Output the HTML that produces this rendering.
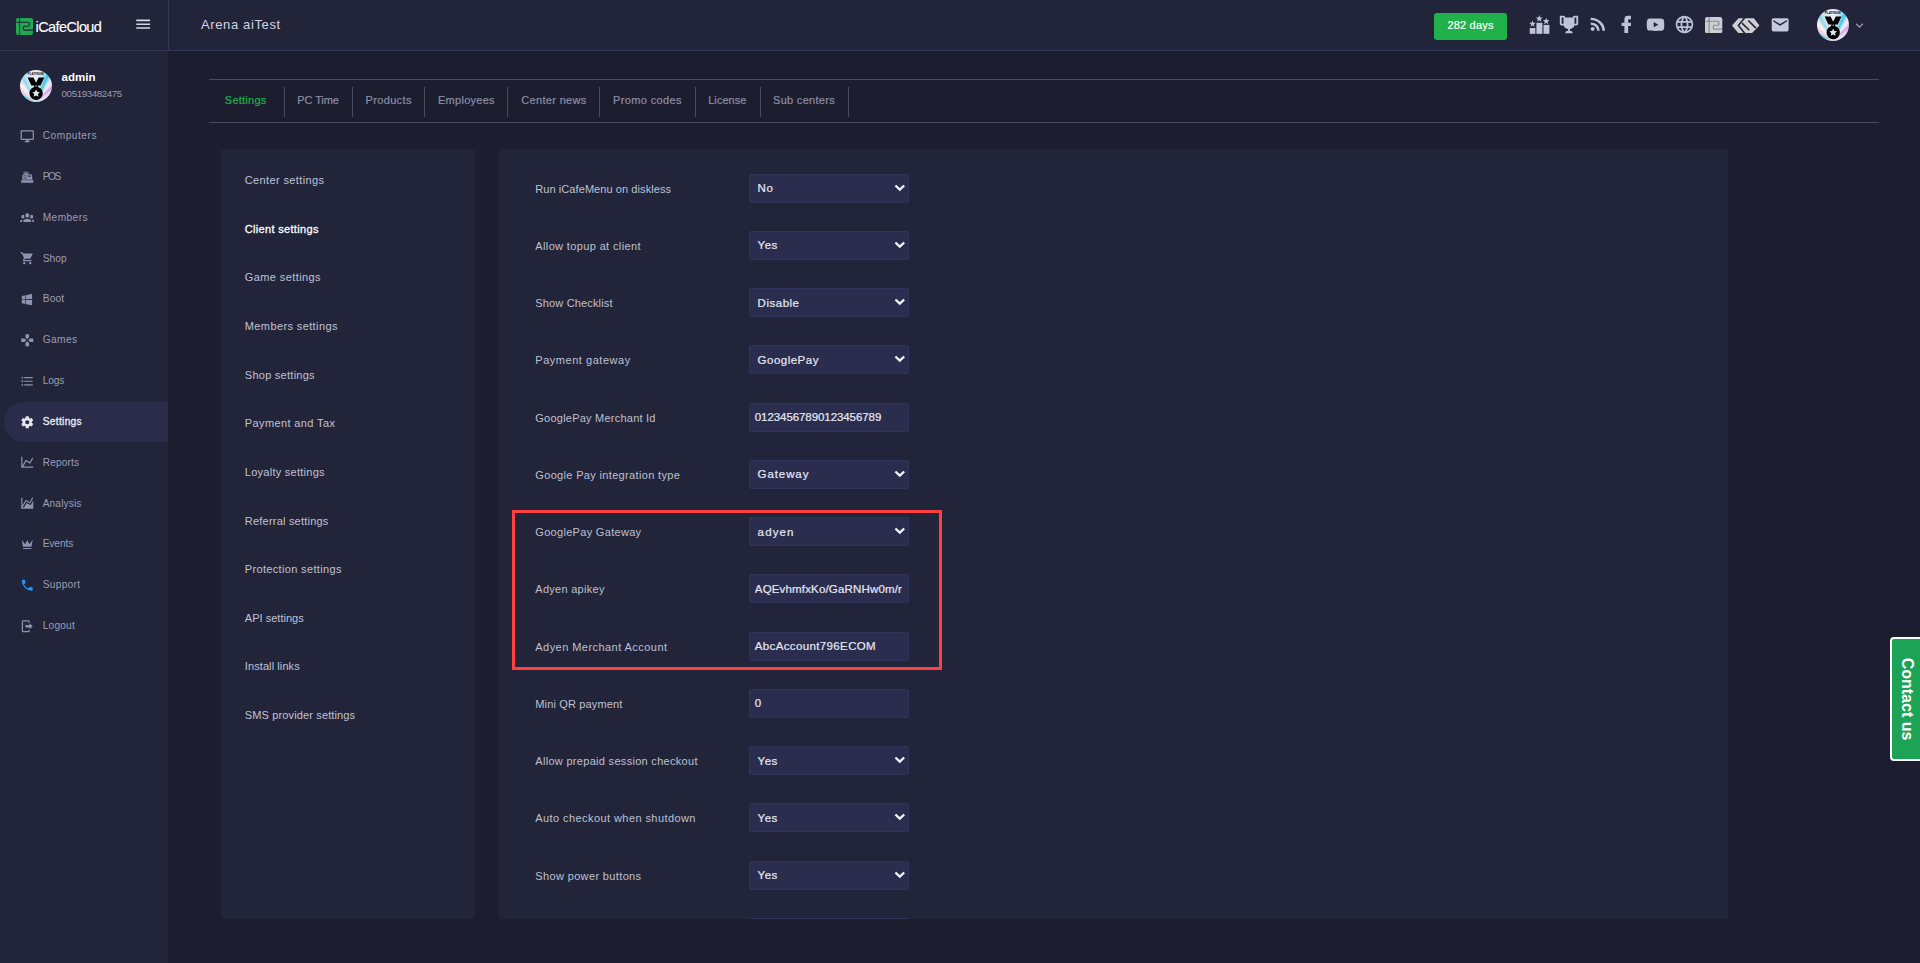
<!DOCTYPE html><html lang="en"><head><meta charset="utf-8"><title>iCafeCloud - Client settings</title><style>

*{box-sizing:border-box;margin:0;padding:0}
html,body{width:1920px;height:963px;overflow:hidden;background:#1c1d2e;font-family:"Liberation Sans", sans-serif;}
.abs,.t,.ic{position:absolute}
.t{white-space:nowrap;line-height:20px;height:20px}
#hdr{left:0;top:0;width:1920px;height:51px;background:#222439;border-bottom:1px solid #34365a}
#side{left:0;top:51px;width:168px;height:912px;background:#222439}
#vline{left:168px;top:0;width:1px;height:50px;background:#34365a}
.panel{background:#222439;border-radius:4px}
.sel,.inp{left:749px;width:160px;height:29px;background:#2b2d4f;border:1px solid #31345a;border-radius:2px}
.hl{background:#484a5d;height:1px}
.vl{background:#484a5d;width:1px}

</style></head><body>
<div class="abs" id="hdr"></div><div class="abs" id="side"></div><div class="abs" id="vline"></div>
<svg class="ic" style="left:16px;top:18px" width="17" height="17" viewBox="0 0 17 17"><rect x="0" y="0" width="17" height="17" rx="2.2" fill="#22a853"/><g fill="none" stroke="#222439" stroke-width="1.1"><path d="M3.700 0V17" stroke-width=".8"/><path d="M0 4.2H12.200Q13.300 4.200 13.300 5.300V7.200Q13.300 8.300 12.200 8.300H8.400Q7.300 8.300 7.300 9.400V11Q7.300 12.100 8.400 12.100H17"/></g></svg>
<svg class="ic" style="left:134.1px;top:15.4px" width="18.4" height="18.4" viewBox="0 0 24 24"><path fill="#d5d7e4" d="M3,6H21V8H3V6M3,11H21V13H3V11M3,16H21V18H3V16Z"/></svg>
<div class="abs" style="left:1434px;top:13px;width:73px;height:27px;background:#21b14b;border-radius:3px"></div>
<svg class="ic" style="left:1529px;top:15px" width="21" height="19" viewBox="0 0 21 19"><g fill="#c2c5d7"><rect x="0.7" y="13.05" width="5.7" height="5.750"/><rect x="7.4" y="7.8" width="6" height="11"/><rect x="14.5" y="9.9" width="5.9" height="8.9"/><polygon points="3.50,5.40 4.36,7.71 6.83,7.82 4.90,9.35 5.56,11.73 3.50,10.37 1.44,11.73 2.10,9.35 0.17,7.82 2.64,7.71"/><polygon points="10.30,0.00 11.21,2.44 13.82,2.56 11.78,4.18 12.47,6.69 10.30,5.25 8.13,6.69 8.82,4.18 6.78,2.56 9.39,2.44"/><polygon points="17.20,2.70 18.09,5.08 20.62,5.19 18.64,6.77 19.32,9.21 17.20,7.81 15.08,9.21 15.76,6.77 13.78,5.19 16.31,5.08"/></g></svg>
<svg class="ic" style="left:1557.9666666666667px;top:14.05px" width="22" height="21" viewBox="0 0 24 24" preserveAspectRatio="none"><path fill="#c0c3d5" d="M20.2,2H19.5H18C17.1,2 16,3 16,4H8C8,3 6.9,2 6,2H4.5H3.8H2V11C2,12 3,13 4,13H6.2C6.6,15 7.9,16.7 11,17V19.1C8.8,19.3 8,20.4 8,21.7V22H16V21.7C16,20.4 15.2,19.3 13,19.1V17C16.1,16.7 17.4,15 17.8,13H20C21,13 22,12 22,11V2H20.2M4,11V4H6V6V11C5.1,11 4.3,11 4,11M20,11C19.7,11 18.9,11 18,11V6V4H20V11Z"/></svg>
<svg class="ic" style="left:1586.9233333333332px;top:14.490749999999998px" width="22.06" height="20.05" viewBox="0 0 24 24" preserveAspectRatio="none"><path fill="#c0c3d5" d="M6.18,15.64A2.18,2.18 0 0,1 8.36,17.82C8.36,19 7.38,20 6.18,20C5,20 4,19 4,17.82A2.18,2.18 0 0,1 6.18,15.64M4,4.44A15.56,15.56 0 0,1 19.56,20H16.73A12.73,12.73 0 0,0 4,7.27V4.44M4,10.1A9.9,9.9 0 0,1 13.9,20H11.07A7.07,7.07 0 0,0 4,12.93V10.1Z"/></svg>
<svg class="ic" style="left:1615.3200000000002px;top:14.07px" width="22.56" height="20.76" viewBox="0 0 24 24" preserveAspectRatio="none"><path fill="#c0c3d5" d="M17,2V2H17V6H15C14.31,6 14,6.81 14,7.5V10H14L17,10V14H14V22H10V14H7V10H10V6A4,4 0 0,1 14,2H17Z"/></svg>
<svg class="ic" style="left:1644.95px;top:13.841666666666669px" width="21" height="21.4" viewBox="0 0 24 24" preserveAspectRatio="none"><path fill="#c0c3d5" d="M10,15L15.19,12L10,9V15M21.56,7.17C21.69,7.64 21.78,8.27 21.84,9.07C21.91,9.87 21.94,10.56 21.94,11.16L22,12C22,14.19 21.84,15.8 21.56,16.83C21.31,17.73 20.73,18.31 19.83,18.56C19.36,18.69 18.5,18.78 17.18,18.84C15.88,18.91 14.69,18.94 13.59,18.94L12,19C7.81,19 5.2,18.84 4.17,18.56C3.27,18.31 2.69,17.73 2.44,16.83C2.31,16.36 2.22,15.73 2.16,14.93C2.09,14.13 2.06,13.44 2.06,12.84L2,12C2,9.81 2.16,8.2 2.44,7.17C2.69,6.27 3.27,5.69 4.17,5.44C4.64,5.31 5.5,5.22 6.82,5.16C8.12,5.09 9.31,5.06 10.41,5.06L12,5C16.19,5 18.8,5.16 19.83,5.44C20.73,5.69 21.31,6.27 21.56,7.17Z"/></svg>
<svg class="ic" style="left:1673.95px;top:14.05px" width="21" height="21" viewBox="0 0 24 24"><path fill="#c0c3d5" d="M16.36,14C16.44,13.34 16.5,12.68 16.5,12C16.5,11.32 16.44,10.66 16.36,10H19.74C19.9,10.64 20,11.31 20,12C20,12.69 19.9,13.36 19.74,14M14.59,19.56C15.19,18.45 15.65,17.25 15.97,16H18.92C17.96,17.65 16.43,18.93 14.59,19.56M14.34,14H9.66C9.56,13.34 9.5,12.68 9.5,12C9.5,11.32 9.56,10.65 9.66,10H14.34C14.43,10.65 14.5,11.32 14.5,12C14.5,12.68 14.43,13.34 14.34,14M12,19.96C11.17,18.76 10.5,17.43 10.09,16H13.91C13.5,17.43 12.83,18.76 12,19.96M8,8H5.08C6.03,6.34 7.57,5.06 9.4,4.44C8.8,5.55 8.35,6.75 8,8M5.08,16H8C8.35,17.25 8.8,18.45 9.4,19.56C7.57,18.93 6.03,17.65 5.08,16M4.26,14C4.1,13.36 4,12.69 4,12C4,11.31 4.1,10.64 4.26,10H7.64C7.56,10.66 7.5,11.32 7.5,12C7.5,12.68 7.56,13.34 7.64,14M12,4.03C12.83,5.23 13.5,6.57 13.91,8H10.09C10.5,6.57 11.17,5.23 12,4.03M18.92,8H15.97C15.65,6.75 15.19,5.55 14.59,4.44C16.43,5.07 17.96,6.34 18.92,8M12,2C6.47,2 2,6.5 2,12A10,10 0 0,0 12,22A10,10 0 0,0 22,12A10,10 0 0,0 12,2Z"/></svg>
<svg class="ic" style="left:1705.400px;top:16.500px" width="17.3" height="16.400" viewBox="0 0 17 17" preserveAspectRatio="none"><rect x="0" y="0" width="17" height="17" rx="2.4" fill="#cdcdd2"/><g fill="none" stroke="#222439" stroke-opacity=".38" stroke-width="1.2"><path d="M4 0V17"/><path d="M0 4.4H12.600Q13.600 4.400 13.600 5.400V7.600Q13.600 8.600 12.600 8.600H9.200Q8.200 8.600 8.200 9.600V11.600Q8.200 12.600 9.200 12.600H17"/></g></svg>
<svg class="ic" style="left:1732.300px;top:17.550px" width="27.600" height="15.400" viewBox="620 145 530 295" preserveAspectRatio="none"><polygon points="620,290 745,148 1040,148 1147,290 1000,437 745,437" fill="#d0d0d4"/><g fill="none" stroke="#222439" stroke-width="30"><polyline points="868,135 742,290 875,450"/><line x1="812" y1="243" x2="952" y2="380"/><line x1="935" y1="195" x2="1080" y2="340"/></g></svg>
<svg class="ic" style="left:1769.5083333333334px;top:14.7px" width="20.3" height="19.8" viewBox="0 0 24 24" preserveAspectRatio="none"><path fill="#c5c9db" d="M20,8L12,13L4,8V6L12,11L20,6M20,4H4C2.89,4 2,4.89 2,6V18A2,2 0 0,0 4,20H20A2,2 0 0,0 22,18V6C22,4.89 21.1,4 20,4Z"/></svg>
<svg class="ic" style="left:1851.9px;top:17.8px" width="15" height="15" viewBox="0 0 24 24"><path fill="#9a9ec0" d="M7.41,8.58L12,13.17L16.59,8.58L18,10L12,16L6,10L7.41,8.58Z"/></svg>
<div class="abs" style="left:20px;top:70px;width:32px;height:32px;border-radius:50%;background:conic-gradient(from 0deg at 50% 100%, #e8eaf4 0deg, #dfe8f2 10deg, #9adcee 18deg, #3fc2ea 24deg, #bfe4f2 31deg, #f6eef4 37deg, #f8d8ec 41deg, #c4a4f0 47deg, #efc8e8 53deg, #e4e6f2 60deg, #dfe6f0 70deg, #dfe6f0 285deg, #5fd0ea 295deg, #e8d8ee 303deg, #f4c8e8 308deg, #f8e8ee 315deg, #fff4e6 319deg, #d8eaf2 325deg, #8fd6ea 331deg, #cfe6f0 340deg, #e4e8f2 352deg, #e8eaf4 360deg)"></div><svg class="ic" style="left:20px;top:70px" width="32" height="32" viewBox="0 0 32 32"><text x="15.6" y="4.9" font-size="3.9" font-weight="700" text-anchor="middle" fill="#111" font-family="Liberation Sans, sans-serif" textLength="16" lengthAdjust="spacingAndGlyphs">PLATINUM</text><path d="M7.600 7.500h5.900l2.600 5.200 2.600-5.200h5.600l-3.700 8h-9.300z" fill="#000"/><circle cx="16.100" cy="16.300" r="2" fill="#000"/><circle cx="16.100" cy="16.100" r=".75" fill="#cfd8e6"/><circle cx="16.100" cy="23.300" r="6.650" fill="#000"/><path d="M16.100 19.500l1.150 2.350 2.600.38-1.880 1.830.45 2.580-2.320-1.220-2.320 1.220.45-2.580-1.880-1.830 2.600-.38z" fill="#dfe6f0"/></svg>
<div class="abs" style="left:1817.0px;top:8.899999999999999px;width:32.2px;height:32.2px;border-radius:50%;background:conic-gradient(from 0deg at 50% 100%, #e8eaf4 0deg, #dfe8f2 10deg, #9adcee 18deg, #3fc2ea 24deg, #bfe4f2 31deg, #f6eef4 37deg, #f8d8ec 41deg, #c4a4f0 47deg, #efc8e8 53deg, #e4e6f2 60deg, #dfe6f0 70deg, #dfe6f0 285deg, #5fd0ea 295deg, #e8d8ee 303deg, #f4c8e8 308deg, #f8e8ee 315deg, #fff4e6 319deg, #d8eaf2 325deg, #8fd6ea 331deg, #cfe6f0 340deg, #e4e8f2 352deg, #e8eaf4 360deg)"></div><svg class="ic" style="left:1817.0px;top:8.899999999999999px" width="32.2" height="32.2" viewBox="0 0 32 32"><text x="15.6" y="4.9" font-size="3.9" font-weight="700" text-anchor="middle" fill="#111" font-family="Liberation Sans, sans-serif" textLength="16" lengthAdjust="spacingAndGlyphs">PLATINUM</text><path d="M7.600 7.500h5.900l2.600 5.200 2.600-5.200h5.600l-3.700 8h-9.300z" fill="#000"/><circle cx="16.100" cy="16.300" r="2" fill="#000"/><circle cx="16.100" cy="16.100" r=".75" fill="#cfd8e6"/><circle cx="16.100" cy="23.300" r="6.650" fill="#000"/><path d="M16.100 19.500l1.150 2.350 2.600.38-1.880 1.830.45 2.580-2.320-1.220-2.320 1.220.45-2.580-1.880-1.830 2.600-.38z" fill="#dfe6f0"/></svg>
<div class="abs" style="left:4px;top:402px;width:164px;height:40px;background:#2a2c49;border-radius:20px 0 0 20px"></div>
<svg class="ic" style="left:19.7px;top:128.8px" width="14.5" height="14.5" viewBox="0 0 24 24"><path fill="#8f93ae" d="M21,16H3V4H21M21,2H3C1.89,2 1,2.89 1,4V16A2,2 0 0,0 3,18H10V20H8V22H16V20H14V18H21A2,2 0 0,0 23,16V4C23,2.89 22.1,2 21,2Z"/></svg>
<svg class="ic" style="left:19.7px;top:169.64px" width="14.5" height="14.5" viewBox="0 0 24 24"><path fill="#8f93ae" d="M2,17H22V21H2V17M6.25,7H9V6H6V3H14V6H11V7H17.8C18.8,7 19.8,8 20,9L20.5,16H3.5L4.05,9C4.05,8 5.05,7 6.25,7M13,9V11H18V9H13M6,9V10H8V9H6M9,9V10H11V9H9M6,11V12H8V11H6M9,11V12H11V11H9M6,13V14H8V13H6M9,13V14H11V13H9M7,4V5H13V4H7Z"/></svg>
<svg class="ic" style="left:19.7px;top:210.47px" width="14.5" height="14.5" viewBox="0 0 24 24"><path fill="#8f93ae" d="M12,5.5A3.5,3.5 0 0,1 15.5,9A3.5,3.5 0 0,1 12,12.5A3.5,3.5 0 0,1 8.5,9A3.5,3.5 0 0,1 12,5.5M5,8C5.56,8 6.08,8.15 6.53,8.42C6.38,9.85 6.8,11.27 7.66,12.38C7.16,13.34 6.16,14 5,14A3,3 0 0,1 2,11A3,3 0 0,1 5,8M19,8A3,3 0 0,1 22,11A3,3 0 0,1 19,14C17.84,14 16.84,13.34 16.34,12.38C17.2,11.27 17.62,9.85 17.47,8.42C17.92,8.15 18.44,8 19,8M5.5,18.25C5.5,16.18 8.41,14.5 12,14.5C15.59,14.5 18.5,16.18 18.5,18.25V20H5.5V18.25M0,20V18.5C0,17.11 1.89,15.94 4.45,15.6C3.86,16.28 3.5,17.22 3.5,18.25V20H0M24,20H20.5V18.25C20.5,17.22 20.14,16.28 19.55,15.6C22.11,15.94 24,17.11 24,18.5V20Z"/></svg>
<svg class="ic" style="left:19.7px;top:251.3px" width="14.5" height="14.5" viewBox="0 0 24 24"><path fill="#8f93ae" d="M17,18C15.89,18 15,18.89 15,20A2,2 0 0,0 17,22A2,2 0 0,0 19,20C19,18.89 18.1,18 17,18M1,2V4H3L6.6,11.59L5.24,14.04C5.09,14.32 5,14.65 5,15A2,2 0 0,0 7,17H19V15H7.42A0.25,0.25 0 0,1 7.17,14.75C7.17,14.7 7.18,14.66 7.2,14.63L8.1,13H15.55C16.3,13 16.96,12.58 17.3,11.97L20.88,5.5C20.95,5.34 21,5.17 21,5A1,1 0 0,0 20,4H5.21L4.27,2M7,18C5.89,18 5,18.89 5,20A2,2 0 0,0 7,22A2,2 0 0,0 9,20C9,18.89 8.1,18 7,18Z"/></svg>
<svg class="ic" style="left:19.7px;top:292.14px" width="14.5" height="14.5" viewBox="0 0 24 24"><path fill="#8f93ae" d="M3,12V6.75L9,5.43V11.91L3,12M20,3V11.75L10,11.9V5.21L20,3M3,13L9,13.09V19.9L3,18.75V13M20,13.25V22L10,20.09V13.1L20,13.25Z"/></svg>
<svg class="ic" style="left:19.7px;top:332.98px" width="14.5" height="14.5" viewBox="0 0 24 24"><path fill="#8f93ae" d="M16.5,9L13.5,12L16.5,15H22V9M9,16.5V22H15V16.5L12,13.5M7.5,9H2V15H7.5L10.5,12M15,7.5V2H9V7.5L12,10.5L15,7.5Z"/></svg>
<svg class="ic" style="left:19.7px;top:373.81px" width="14.5" height="14.5" viewBox="0 0 24 24"><path fill="#8f93ae" d="M7,5H21V7H7V5M7,13V11H21V13H7M4,4.5A1.5,1.5 0 0,1 5.5,6A1.5,1.5 0 0,1 4,7.5A1.5,1.5 0 0,1 2.5,6A1.5,1.5 0 0,1 4,4.5M4,10.5A1.5,1.5 0 0,1 5.5,12A1.5,1.5 0 0,1 4,13.5A1.5,1.5 0 0,1 2.5,12A1.5,1.5 0 0,1 4,10.5M7,19V17H21V19H7M4,16.5A1.5,1.5 0 0,1 5.5,18A1.5,1.5 0 0,1 4,19.5A1.5,1.5 0 0,1 2.5,18A1.5,1.5 0 0,1 4,16.5Z"/></svg>
<svg class="ic" style="left:19.7px;top:414.64px" width="14.5" height="14.5" viewBox="0 0 24 24"><path fill="#e4e6ef" d="M12,15.5A3.5,3.5 0 0,1 8.5,12A3.5,3.5 0 0,1 12,8.5A3.5,3.5 0 0,1 15.5,12A3.5,3.5 0 0,1 12,15.5M19.43,12.97C19.47,12.65 19.5,12.33 19.5,12C19.5,11.67 19.47,11.34 19.43,11L21.54,9.37C21.73,9.22 21.78,8.95 21.66,8.73L19.66,5.27C19.54,5.05 19.27,4.96 19.05,5.05L16.56,6.05C16.04,5.66 15.5,5.32 14.87,5.07L14.5,2.42C14.46,2.18 14.25,2 14,2H10C9.75,2 9.54,2.18 9.5,2.42L9.13,5.07C8.5,5.32 7.96,5.66 7.44,6.05L4.95,5.05C4.73,4.96 4.46,5.05 4.34,5.27L2.34,8.73C2.21,8.95 2.27,9.22 2.46,9.37L4.57,11C4.53,11.34 4.5,11.67 4.5,12C4.5,12.33 4.53,12.65 4.57,12.97L2.46,14.63C2.27,14.78 2.21,15.05 2.34,15.27L4.34,18.73C4.46,18.95 4.73,19.03 4.95,18.95L7.44,17.94C7.96,18.34 8.5,18.68 9.13,18.93L9.5,21.58C9.54,21.82 9.75,22 10,22H14C14.25,22 14.46,21.82 14.5,21.58L14.87,18.93C15.5,18.67 16.04,18.34 16.56,17.94L19.05,18.95C19.27,19.03 19.54,18.95 19.66,18.73L21.66,15.27C21.78,15.05 21.73,14.78 21.54,14.63L19.43,12.97Z"/></svg>
<svg class="ic" style="left:19.7px;top:455.48px" width="14.5" height="14.5" viewBox="0 0 24 24"><path fill="#8f93ae" d="M16,11.78L20.24,4.45L21.97,5.45L16.74,14.5L10.23,10.75L5.46,19H22V21H2V3H4V17.54L9.5,8L16,11.78Z"/></svg>
<svg class="ic" style="left:19.7px;top:496.31px" width="14.5" height="14.5" viewBox="0 0 24 24"><path fill="#8f93ae" d="M17.45,15.18L22,7.31V19L22,21H2V3H4V15.54L9.5,6L16,9.78L20.24,2.45L21.97,3.45L16.74,12.5L10.23,8.75L4.31,19H6.57L10.96,11.44L17.45,15.18Z"/></svg>
<svg class="ic" style="left:19.7px;top:537.15px" width="14.5" height="14.5" viewBox="0 0 24 24"><path fill="#8f93ae" d="M5,16L3,5L8.5,12L12,5L15.5,12L21,5L19,16H5M19,19A1,1 0 0,1 18,20H6A1,1 0 0,1 5,19V18H19V19Z"/></svg>
<svg class="ic" style="left:19.7px;top:577.99px" width="14.5" height="14.5" viewBox="0 0 24 24"><path fill="#1e9bff" d="M6.62,10.79C8.06,13.62 10.38,15.94 13.21,17.38L15.41,15.18C15.69,14.9 16.08,14.82 16.43,14.93C17.55,15.3 18.75,15.5 20,15.5A1,1 0 0,1 21,16.5V20A1,1 0 0,1 20,21A17,17 0 0,1 3,4A1,1 0 0,1 4,3H7.5A1,1 0 0,1 8.5,4C8.5,5.25 8.7,6.45 9.07,7.57C9.18,7.92 9.1,8.31 8.82,8.59L6.62,10.79Z"/></svg>
<svg class="ic" style="left:19.7px;top:618.82px" width="14.5" height="14.5" viewBox="0 0 24 24"><path fill="#8f93ae" d="M16,17V14H9V10H16V7L21,12L16,17M14,2A2,2 0 0,1 16,4V6H14V4H5V20H14V18H16V20A2,2 0 0,1 14,22H5A2,2 0 0,1 3,20V4A2,2 0 0,1 5,2H14Z"/></svg>
<div class="abs hl" style="left:209px;top:79px;width:1670px"></div>
<div class="abs hl" style="left:209px;top:122px;width:1670px"></div>
<div class="abs vl" style="left:284px;top:87px;height:30px"></div>
<div class="abs vl" style="left:352px;top:87px;height:30px"></div>
<div class="abs vl" style="left:424px;top:87px;height:30px"></div>
<div class="abs vl" style="left:507px;top:87px;height:30px"></div>
<div class="abs vl" style="left:599px;top:87px;height:30px"></div>
<div class="abs vl" style="left:695px;top:87px;height:30px"></div>
<div class="abs vl" style="left:760px;top:87px;height:30px"></div>
<div class="abs vl" style="left:848px;top:87px;height:30px"></div>
<div class="abs panel" style="left:221px;top:149px;width:254px;height:770px"></div>
<div class="abs panel" id="rp" style="left:499px;top:149px;width:1229px;height:770px;overflow:hidden;border-radius:0">
<div class="abs sel" style="left:250px;top:25.00px">
<svg class="ic" style="left:144.300px;top:9.200px" width="11.6" height="8" viewBox="0 0 11.6 8"><path d="M1.400 1.500L5.800 5.700 10.200 1.500" fill="none" stroke="#f2f3f8" stroke-width="2.300"/></svg>
</div>
<div class="abs sel" style="left:250px;top:82.00px">
<svg class="ic" style="left:144.300px;top:9.200px" width="11.6" height="8" viewBox="0 0 11.6 8"><path d="M1.400 1.500L5.800 5.700 10.200 1.500" fill="none" stroke="#f2f3f8" stroke-width="2.300"/></svg>
</div>
<div class="abs sel" style="left:250px;top:139.00px">
<svg class="ic" style="left:144.300px;top:9.200px" width="11.6" height="8" viewBox="0 0 11.6 8"><path d="M1.400 1.500L5.800 5.700 10.200 1.500" fill="none" stroke="#f2f3f8" stroke-width="2.300"/></svg>
</div>
<div class="abs sel" style="left:250px;top:196.00px">
<svg class="ic" style="left:144.300px;top:9.200px" width="11.6" height="8" viewBox="0 0 11.6 8"><path d="M1.400 1.500L5.800 5.700 10.200 1.500" fill="none" stroke="#f2f3f8" stroke-width="2.300"/></svg>
</div>
<div class="abs inp" style="left:250px;top:254.00px">
</div>
<div class="abs sel" style="left:250px;top:311.00px">
<svg class="ic" style="left:144.300px;top:9.200px" width="11.6" height="8" viewBox="0 0 11.6 8"><path d="M1.400 1.500L5.800 5.700 10.200 1.500" fill="none" stroke="#f2f3f8" stroke-width="2.300"/></svg>
</div>
<div class="abs sel" style="left:250px;top:368.00px">
<svg class="ic" style="left:144.300px;top:9.200px" width="11.6" height="8" viewBox="0 0 11.6 8"><path d="M1.400 1.500L5.800 5.700 10.200 1.500" fill="none" stroke="#f2f3f8" stroke-width="2.300"/></svg>
</div>
<div class="abs inp" style="left:250px;top:425.00px">
</div>
<div class="abs inp" style="left:250px;top:483.00px">
</div>
<div class="abs inp" style="left:250px;top:540.00px">
</div>
<div class="abs sel" style="left:250px;top:597.00px">
<svg class="ic" style="left:144.300px;top:9.200px" width="11.6" height="8" viewBox="0 0 11.6 8"><path d="M1.400 1.500L5.800 5.700 10.200 1.500" fill="none" stroke="#f2f3f8" stroke-width="2.300"/></svg>
</div>
<div class="abs sel" style="left:250px;top:654.00px">
<svg class="ic" style="left:144.300px;top:9.200px" width="11.6" height="8" viewBox="0 0 11.6 8"><path d="M1.400 1.500L5.800 5.700 10.200 1.500" fill="none" stroke="#f2f3f8" stroke-width="2.300"/></svg>
</div>
<div class="abs sel" style="left:250px;top:712.00px">
<svg class="ic" style="left:144.300px;top:9.200px" width="11.6" height="8" viewBox="0 0 11.6 8"><path d="M1.400 1.500L5.800 5.700 10.200 1.500" fill="none" stroke="#f2f3f8" stroke-width="2.300"/></svg>
</div>
<div class="abs sel" style="left:250px;top:769.00px">
<svg class="ic" style="left:144.300px;top:9.200px" width="11.6" height="8" viewBox="0 0 11.6 8"><path d="M1.400 1.500L5.800 5.700 10.200 1.500" fill="none" stroke="#f2f3f8" stroke-width="2.300"/></svg>
</div>
</div>
<div class="abs" style="left:512px;top:510px;width:430px;height:160px;border:3px solid #ff4040"></div>
<div class="abs" style="left:1890px;top:637px;width:34px;height:124px;background:#1da355;border:2px solid #fff;border-radius:4px 0 0 4px"></div>
<div class="abs" id="contact" style="left:1907px;top:699.300px;width:0;height:0"><div style="position:absolute;white-space:nowrap;transform:translate(-50%,-50%) rotate(90deg);font-weight:700;font-size:16px;color:#fff;line-height:20px">Contact us</div></div>
<span class="t" id="t0" style="left:35.5px;top:17.18px;font-size:14.5px;font-weight:400;color:#ffffff;letter-spacing:-0.594px;-webkit-text-stroke:0.12px #fff;">iCafeCloud</span>
<span class="t" id="t1" style="left:201px;top:14.70px;font-size:13px;font-weight:400;color:#d3d5e3;letter-spacing:0.630px;">Arena aiTest</span>
<span class="t" id="t2" style="left:1447.4px;top:15.39px;font-size:11px;font-weight:400;color:#ffffff;letter-spacing:0.192px;-webkit-text-stroke:0.2px;">282 days</span>
<span class="t" id="t3" style="left:61.6px;top:67.22px;font-size:11.5px;font-weight:700;color:#ffffff;letter-spacing:0.031px;">admin</span>
<span class="t" id="t4" style="left:61.6px;top:83.84px;font-size:9.7px;font-weight:400;color:#989cb4;letter-spacing:-0.369px;">005193482475</span>
<span class="t" id="t5" style="left:42.7px;top:125.67px;font-size:10.2px;font-weight:400;color:#9a9db6;letter-spacing:0.496px;">Computers</span>
<span class="t" id="t6" style="left:42.7px;top:166.67px;font-size:10.2px;font-weight:400;color:#9a9db6;letter-spacing:-1.500px;">POS</span>
<span class="t" id="t7" style="left:42.7px;top:207.67px;font-size:10.2px;font-weight:400;color:#9a9db6;letter-spacing:0.405px;">Members</span>
<span class="t" id="t8" style="left:42.7px;top:248.67px;font-size:10.2px;font-weight:400;color:#9a9db6;letter-spacing:0.101px;">Shop</span>
<span class="t" id="t9" style="left:42.7px;top:288.67px;font-size:10.2px;font-weight:400;color:#9a9db6;letter-spacing:0.144px;">Boot</span>
<span class="t" id="t10" style="left:42.7px;top:329.67px;font-size:10.2px;font-weight:400;color:#9a9db6;letter-spacing:0.389px;">Games</span>
<span class="t" id="t11" style="left:42.7px;top:370.67px;font-size:10.2px;font-weight:400;color:#9a9db6;letter-spacing:-0.131px;">Logs</span>
<span class="t" id="t12" style="left:42.7px;top:411.67px;font-size:10.2px;font-weight:400;color:#eceef5;letter-spacing:0.312px;-webkit-text-stroke:0.3px;">Settings</span>
<span class="t" id="t13" style="left:42.7px;top:452.67px;font-size:10.2px;font-weight:400;color:#9a9db6;letter-spacing:0.121px;">Reports</span>
<span class="t" id="t14" style="left:42.7px;top:493.67px;font-size:10.2px;font-weight:400;color:#9a9db6;letter-spacing:0.109px;">Analysis</span>
<span class="t" id="t15" style="left:42.7px;top:533.67px;font-size:10.2px;font-weight:400;color:#9a9db6;letter-spacing:-0.111px;">Events</span>
<span class="t" id="t16" style="left:42.7px;top:574.67px;font-size:10.2px;font-weight:400;color:#9a9db6;letter-spacing:0.285px;">Support</span>
<span class="t" id="t17" style="left:42.7px;top:615.67px;font-size:10.2px;font-weight:400;color:#9a9db6;letter-spacing:0.186px;">Logout</span>
<span class="t" id="t18" style="left:224.8px;top:90.39px;font-size:11px;font-weight:400;color:#21b14b;letter-spacing:0.250px;-webkit-text-stroke:0.2px;">Settings</span>
<span class="t" id="t19" style="left:297.3px;top:90.39px;font-size:11px;font-weight:400;color:#8c8fa7;letter-spacing:-0.098px;-webkit-text-stroke:0.2px;">PC Time</span>
<span class="t" id="t20" style="left:365.5px;top:90.39px;font-size:11px;font-weight:400;color:#8c8fa7;letter-spacing:0.354px;-webkit-text-stroke:0.2px;">Products</span>
<span class="t" id="t21" style="left:438px;top:90.39px;font-size:11px;font-weight:400;color:#8c8fa7;letter-spacing:0.272px;-webkit-text-stroke:0.2px;">Employees</span>
<span class="t" id="t22" style="left:521.2px;top:90.39px;font-size:11px;font-weight:400;color:#8c8fa7;letter-spacing:0.343px;-webkit-text-stroke:0.2px;">Center news</span>
<span class="t" id="t23" style="left:613px;top:90.39px;font-size:11px;font-weight:400;color:#8c8fa7;letter-spacing:0.379px;-webkit-text-stroke:0.2px;">Promo codes</span>
<span class="t" id="t24" style="left:708.2px;top:90.39px;font-size:11px;font-weight:400;color:#8c8fa7;letter-spacing:0.063px;-webkit-text-stroke:0.2px;">License</span>
<span class="t" id="t25" style="left:773px;top:90.39px;font-size:11px;font-weight:400;color:#8c8fa7;letter-spacing:0.300px;-webkit-text-stroke:0.2px;">Sub centers</span>
<span class="t" id="t26" style="left:244.8px;top:170.39px;font-size:11px;font-weight:400;color:#c0c2d5;letter-spacing:0.373px;">Center settings</span>
<span class="t" id="t27" style="left:244.8px;top:219.39px;font-size:11px;font-weight:400;color:#ffffff;letter-spacing:0.322px;-webkit-text-stroke:0.28px;">Client settings</span>
<span class="t" id="t28" style="left:244.8px;top:267.39px;font-size:11px;font-weight:400;color:#c0c2d5;letter-spacing:0.407px;">Game settings</span>
<span class="t" id="t29" style="left:244.8px;top:316.39px;font-size:11px;font-weight:400;color:#c0c2d5;letter-spacing:0.386px;">Members settings</span>
<span class="t" id="t30" style="left:244.8px;top:365.39px;font-size:11px;font-weight:400;color:#c0c2d5;letter-spacing:0.262px;">Shop settings</span>
<span class="t" id="t31" style="left:244.8px;top:413.39px;font-size:11px;font-weight:400;color:#c0c2d5;letter-spacing:0.379px;">Payment and Tax</span>
<span class="t" id="t32" style="left:244.8px;top:462.39px;font-size:11px;font-weight:400;color:#c0c2d5;letter-spacing:0.265px;">Loyalty settings</span>
<span class="t" id="t33" style="left:244.8px;top:511.39px;font-size:11px;font-weight:400;color:#c0c2d5;letter-spacing:0.213px;">Referral settings</span>
<span class="t" id="t34" style="left:244.8px;top:559.39px;font-size:11px;font-weight:400;color:#c0c2d5;letter-spacing:0.339px;">Protection settings</span>
<span class="t" id="t35" style="left:244.8px;top:608.39px;font-size:11px;font-weight:400;color:#c0c2d5;letter-spacing:0.018px;">API settings</span>
<span class="t" id="t36" style="left:244.8px;top:656.39px;font-size:11px;font-weight:400;color:#c0c2d5;letter-spacing:0.092px;">Install links</span>
<span class="t" id="t37" style="left:244.8px;top:705.39px;font-size:11px;font-weight:400;color:#c0c2d5;letter-spacing:0.135px;">SMS provider settings</span>
<span class="t" id="t38" style="left:535.3px;top:179.39px;font-size:11px;font-weight:400;color:#bfc1d2;letter-spacing:0.075px;">Run iCafeMenu on diskless</span>
<span class="t" id="t39" style="left:757.6px;top:178.22px;font-size:11.5px;font-weight:400;color:#e6e8f2;letter-spacing:0.597px;-webkit-text-stroke:0.2px;">No</span>
<span class="t" id="t40" style="left:535.3px;top:236.39px;font-size:11px;font-weight:400;color:#bfc1d2;letter-spacing:0.368px;">Allow topup at client</span>
<span class="t" id="t41" style="left:757.6px;top:235.22px;font-size:11.5px;font-weight:400;color:#e6e8f2;letter-spacing:0.467px;-webkit-text-stroke:0.2px;">Yes</span>
<span class="t" id="t42" style="left:535.3px;top:293.39px;font-size:11px;font-weight:400;color:#bfc1d2;letter-spacing:0.154px;">Show Checklist</span>
<span class="t" id="t43" style="left:757.6px;top:293.22px;font-size:11.5px;font-weight:400;color:#e6e8f2;letter-spacing:0.507px;-webkit-text-stroke:0.2px;">Disable</span>
<span class="t" id="t44" style="left:535.3px;top:350.39px;font-size:11px;font-weight:400;color:#bfc1d2;letter-spacing:0.533px;">Payment gateway</span>
<span class="t" id="t45" style="left:757.6px;top:350.22px;font-size:11.5px;font-weight:400;color:#e6e8f2;letter-spacing:0.487px;-webkit-text-stroke:0.2px;">GooglePay</span>
<span class="t" id="t46" style="left:535.3px;top:408.39px;font-size:11px;font-weight:400;color:#bfc1d2;letter-spacing:0.231px;">GooglePay Merchant Id</span>
<span class="t" id="t47" style="left:754.8px;top:407.22px;font-size:11.5px;font-weight:400;color:#e6e8f2;letter-spacing:-0.075px;-webkit-text-stroke:0.2px;">01234567890123456789</span>
<span class="t" id="t48" style="left:535.3px;top:465.39px;font-size:11px;font-weight:400;color:#bfc1d2;letter-spacing:0.336px;">Google Pay integration type</span>
<span class="t" id="t49" style="left:757.6px;top:464.22px;font-size:11.5px;font-weight:400;color:#e6e8f2;letter-spacing:0.902px;-webkit-text-stroke:0.2px;">Gateway</span>
<span class="t" id="t50" style="left:535.3px;top:522.39px;font-size:11px;font-weight:400;color:#bfc1d2;letter-spacing:0.307px;">GooglePay Gateway</span>
<span class="t" id="t51" style="left:757.6px;top:522.22px;font-size:11.5px;font-weight:400;color:#e6e8f2;letter-spacing:1.139px;-webkit-text-stroke:0.2px;">adyen</span>
<span class="t" id="t52" style="left:535.3px;top:579.39px;font-size:11px;font-weight:400;color:#bfc1d2;letter-spacing:0.278px;">Adyen apikey</span>
<span class="t" id="t53" style="left:754.8px;top:579.22px;font-size:11.5px;font-weight:400;color:#e6e8f2;letter-spacing:0.167px;width:147.500px;overflow:hidden;-webkit-text-stroke:0.2px;">AQEvhmfxKo/GaRNHw0m/n</span>
<span class="t" id="t54" style="left:535.3px;top:637.39px;font-size:11px;font-weight:400;color:#bfc1d2;letter-spacing:0.448px;">Adyen Merchant Account</span>
<span class="t" id="t55" style="left:754.8px;top:636.22px;font-size:11.5px;font-weight:400;color:#e6e8f2;letter-spacing:0.365px;-webkit-text-stroke:0.2px;">AbcAccount796ECOM</span>
<span class="t" id="t56" style="left:535.3px;top:694.39px;font-size:11px;font-weight:400;color:#bfc1d2;letter-spacing:0.151px;">Mini QR payment</span>
<span class="t" id="t57" style="left:754.8px;top:693.22px;font-size:11.5px;font-weight:400;color:#e6e8f2;letter-spacing:0.000px;-webkit-text-stroke:0.2px;">0</span>
<span class="t" id="t58" style="left:535.3px;top:751.39px;font-size:11px;font-weight:400;color:#bfc1d2;letter-spacing:0.301px;">Allow prepaid session checkout</span>
<span class="t" id="t59" style="left:757.6px;top:751.22px;font-size:11.5px;font-weight:400;color:#e6e8f2;letter-spacing:0.467px;-webkit-text-stroke:0.2px;">Yes</span>
<span class="t" id="t60" style="left:535.3px;top:808.39px;font-size:11px;font-weight:400;color:#bfc1d2;letter-spacing:0.422px;">Auto checkout when shutdown</span>
<span class="t" id="t61" style="left:757.6px;top:808.22px;font-size:11.5px;font-weight:400;color:#e6e8f2;letter-spacing:0.467px;-webkit-text-stroke:0.2px;">Yes</span>
<span class="t" id="t62" style="left:535.3px;top:866.39px;font-size:11px;font-weight:400;color:#bfc1d2;letter-spacing:0.360px;">Show power buttons</span>
<span class="t" id="t63" style="left:757.6px;top:865.22px;font-size:11.5px;font-weight:400;color:#e6e8f2;letter-spacing:0.467px;-webkit-text-stroke:0.2px;">Yes</span>
</body></html>
